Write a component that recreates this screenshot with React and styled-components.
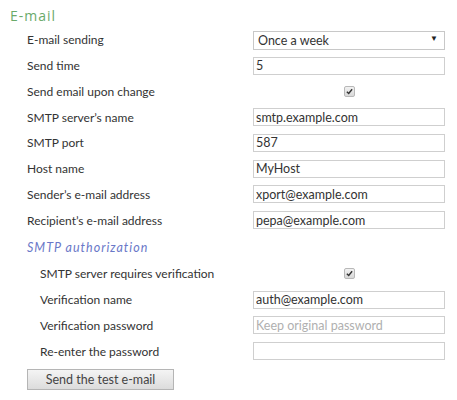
import React from 'react';
import styled, { createGlobalStyle } from 'styled-components';

const GlobalStyle = createGlobalStyle`
  body {
    margin: 0;
    background: #fff;
    font-family: Lato, "Open Sans", sans-serif;
    color: #333;
  }
`;

const Page = styled.div`
  padding: 7px 0 0 10px;
  width: 447px;
`;

const Title = styled.h2`
  margin: 0;
  font-family: "Open Sans", sans-serif;
  font-size: 14px;
  font-weight: 400;
  letter-spacing: 1px;
  color: #6aaa6a;
  line-height: 18px;
`;

const Form = styled.div`
  padding-left: 17px;
  padding-top: 2px;
`;

const Row = styled.div`
  display: grid;
  grid-template-columns: ${p => (p.$indent ? '213px' : '226px')} 192px;
  align-items: center;
  height: 25.75px;
  padding-left: ${p => (p.$indent ? '13px' : '0')};
`;

const Label = styled.span`
  font-size: 12px;
  color: #333;
  white-space: nowrap;
`;

const TextInput = styled.input`
  box-sizing: border-box;
  width: 192px;
  height: 18px;
  border: 1px solid #cfcfcf;
  padding: 0 2px;
  font-family: inherit;
  font-size: 12.5px;
  color: #333;
  outline: none;
  &::placeholder {
    color: #b0b0b0;
  }
`;

const SelectWrap = styled.div`
  position: relative;
  width: 192px;
`;

const Select = styled.select`
  box-sizing: border-box;
  appearance: none;
  width: 192px;
  height: 19px;
  border: 1px solid #c8c8c8;
  background: #fff;
  padding: 0 4px;
  font-family: inherit;
  font-size: 12.5px;
  color: #333;
`;

const Arrow = styled.span`
  position: absolute;
  right: 7px;
  top: 4px;
  font-size: 8px;
  color: #222;
  pointer-events: none;
`;

const CheckCell = styled.div`
  display: flex;
  justify-content: center;
`;

const Check = styled.span`
  width: 11px;
  height: 11px;
  border: 1px solid #b8b8b8;
  border-radius: 2px;
  background: linear-gradient(#f2f2f2, #d8d8d8);
  display: flex;
  align-items: center;
  justify-content: center;
  box-sizing: border-box;
`;

const SubTitle = styled.h3`
  margin: 2px 0 0;
  height: 26px;
  line-height: 26px;
  font-size: 12.5px;
  font-weight: 400;
  font-style: italic;
  letter-spacing: 1px;
  color: #6a78c8;
`;

const Button = styled.button`
  margin-top: 5px;
  width: 147px;
  height: 21px;
  border: 1px solid #b5b5b5;
  background: linear-gradient(#f4f4f4, #dcdcdc);
  font-family: inherit;
  font-size: 12.5px;
  color: #444;
  padding: 0;
`;

const CheckMark = () => (
  <Check>
    <svg width="7" height="7" viewBox="0 0 8 8">
      <path d="M1 4.2 L3.1 6.3 L7 1.4" fill="none" stroke="#333" strokeWidth="1.6" />
    </svg>
  </Check>
);

const mainFields = [
  { label: 'SMTP server\u2019s name', value: 'smtp.example.com' },
  { label: 'SMTP port', value: '587' },
  { label: 'Host name', value: 'MyHost' },
  { label: 'Sender\u2019s e-mail address', value: 'xport@example.com' },
  { label: 'Recipient\u2019s e-mail address', value: 'pepa@example.com' },
];

export default function App() {
  return (
    <Page>
      <GlobalStyle />
      <Title>E-mail</Title>
      <Form>
        <Row>
          <Label>E-mail sending</Label>
          <SelectWrap>
            <Select defaultValue="week">
              <option value="week">Once a week</option>
            </Select>
            <Arrow>▼</Arrow>
          </SelectWrap>
        </Row>
        <Row>
          <Label>Send time</Label>
          <TextInput defaultValue="5" />
        </Row>
        <Row>
          <Label>Send email upon change</Label>
          <CheckCell><CheckMark /></CheckCell>
        </Row>
        {mainFields.map(f => (
          <Row key={f.label}>
            <Label>{f.label}</Label>
            <TextInput defaultValue={f.value} />
          </Row>
        ))}
        <SubTitle>SMTP authorization</SubTitle>
        <Row $indent>
          <Label>SMTP server requires verification</Label>
          <CheckCell><CheckMark /></CheckCell>
        </Row>
        <Row $indent>
          <Label>Verification name</Label>
          <TextInput defaultValue="auth@example.com" />
        </Row>
        <Row $indent>
          <Label>Verification password</Label>
          <TextInput type="password" placeholder="Keep original password" />
        </Row>
        <Row $indent>
          <Label>Re-enter the password</Label>
          <TextInput type="password" />
        </Row>
        <Button>Send the test e-mail</Button>
      </Form>
    </Page>
  );
}
